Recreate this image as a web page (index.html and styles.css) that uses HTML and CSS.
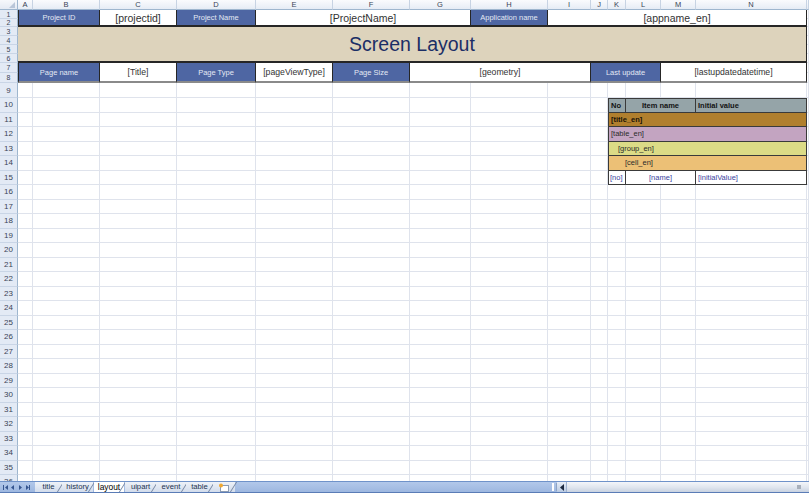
FILE: index.html
```html
<!DOCTYPE html>
<html>
<head>
<meta charset="utf-8">
<link rel="stylesheet" href="styles.css">
</head>
<body>
<div class="app">
  <div class="sheet" id="sheet">
    <div class="corner"><svg width="18" height="10" viewBox="0 0 18 10"><polygon points="15,2 15,8 9,8" fill="#b9c6d8"/></svg></div>
    <div class="colhdr">A</div>
    <div class="colhdr">B</div>
    <div class="colhdr">C</div>
    <div class="colhdr">D</div>
    <div class="colhdr">E</div>
    <div class="colhdr">F</div>
    <div class="colhdr">G</div>
    <div class="colhdr">H</div>
    <div class="colhdr">I</div>
    <div class="colhdr">J</div>
    <div class="colhdr">K</div>
    <div class="colhdr">L</div>
    <div class="colhdr">M</div>
    <div class="colhdr">N</div>
    <div class="colhdr"></div>

    <div class="rowhdr small">1</div>
    <div class="rowhdr small">2</div>
    <div class="rowhdr small">3</div>
    <div class="rowhdr small">4</div>
    <div class="rowhdr small">5</div>
    <div class="rowhdr small">6</div>
    <div class="rowhdr small">7</div>
    <div class="rowhdr small">8</div>
    <div class="rowhdr">9</div>
    <div class="rowhdr">10</div>
    <div class="rowhdr">11</div>
    <div class="rowhdr">12</div>
    <div class="rowhdr">13</div>
    <div class="rowhdr">14</div>
    <div class="rowhdr">15</div>
    <div class="rowhdr">16</div>
    <div class="rowhdr">17</div>
    <div class="rowhdr">18</div>
    <div class="rowhdr">19</div>
    <div class="rowhdr">20</div>
    <div class="rowhdr">21</div>
    <div class="rowhdr">22</div>
    <div class="rowhdr">23</div>
    <div class="rowhdr">24</div>
    <div class="rowhdr">25</div>
    <div class="rowhdr">26</div>
    <div class="rowhdr">27</div>
    <div class="rowhdr">28</div>
    <div class="rowhdr">29</div>
    <div class="rowhdr">30</div>
    <div class="rowhdr">31</div>
    <div class="rowhdr">32</div>
    <div class="rowhdr">33</div>
    <div class="rowhdr">34</div>
    <div class="rowhdr">35</div>
    <div class="rowhdr">36</div>

    <!-- rows 1-2 -->
    <div class="m band1 label first a-pid">Project ID</div>
    <div class="m band1 value a-pidv">[projectid]</div>
    <div class="m band1 label a-pname">Project Name</div>
    <div class="m band1 value a-pnamev">[ProjectName]</div>
    <div class="m band1 label a-app">Application name</div>
    <div class="m band1 value a-appv">[appname_en]</div>

    <!-- rows 3-6 -->
    <div class="m titleband a-title">Screen Layout</div>

    <!-- rows 7-8 -->
    <div class="m band2 label first a-pg">Page name</div>
    <div class="m band2 value2 a-pgv">[Title]</div>
    <div class="m band2 label a-type">Page Type</div>
    <div class="m band2 value2 a-typev">[pageViewType]</div>
    <div class="m band2 label a-size">Page Size</div>
    <div class="m band2 value2 a-sizev">[geometry]</div>
    <div class="m band2 label a-upd">Last update</div>
    <div class="m band2 value2 a-updv">[lastupdatedatetime]</div>

    <!-- item table -->
    <div class="m t thead tl tt a-h-no">No</div>
    <div class="m t thead tt center a-h-name">Item name</div>
    <div class="m t thead tt a-h-init">Initial value</div>
    <div class="m t tl trow r-title a-r11">[title_en]</div>
    <div class="m t tl trow r-table a-r12">[table_en]</div>
    <div class="m t tl trow r-group a-r13">[group_en]</div>
    <div class="m t tl trow r-cell a-r14">[cell_en]</div>
    <div class="m t tl tdata a-d-no">[no]</div>
    <div class="m t tdata center a-d-name">[name]</div>
    <div class="m t tdata a-d-init">[initialValue]</div>
  </div>

  <div class="tabbar">
    <div class="nav">
      <svg width="34" height="11" viewBox="0 0 34 11">
        <rect x="3" y="3" width="1" height="5" fill="#35558f"/>
        <polygon points="8,3 8,8 5,5.5" fill="#35558f"/>
        <polygon points="14,3 14,8 11,5.5" fill="#35558f"/>
        <polygon points="19,3 19,8 22,5.5" fill="#35558f"/>
        <polygon points="26,3 26,8 29,5.5" fill="#35558f"/>
        <rect x="29" y="3" width="1" height="5" fill="#35558f"/>
      </svg>
    </div>
    <div class="tabs">
      <div class="tab w-title">title</div>
      <div class="tab w-history">history</div>
      <div class="tab active w-layout">layout</div>
      <div class="tab w-uipart">uipart</div>
      <div class="tab w-event">event</div>
      <div class="tab w-table">table</div>
      <div class="tab w-new">
        <svg width="12" height="9" viewBox="0 0 12 9">
          <rect x="2.5" y="2.5" width="8" height="6" fill="#fff" stroke="#8b9bb2"/>
          <circle cx="3" cy="2.5" r="2" fill="#f0a830"/>
        </svg>
      </div>
    </div>
    <div class="filler"></div>
    <div class="hscroll">
      <div class="split"></div>
      <div class="sbtn"><svg width="6" height="7" viewBox="0 0 6 7"><polygon points="5,0 5,7 1,3.5" fill="#1d2a40"/></svg></div>
      <div class="track"><div class="grip"></div></div>
    </div>
  </div>
</div>
<script src="script.js"></script>
</body>
</html>
```

FILE: styles.css
```css
* { box-sizing: border-box; }

html, body {
  margin: 0;
  padding: 0;
  background: #ffffff;
  overflow: hidden;
}

.app {
  width: 809px;
  height: 493px;
  display: flex;
  flex-direction: column;
  font-family: "Liberation Sans", Arial, sans-serif;
}

.sheet {
  display: grid;
  grid-template-columns: 18px 15px 67px 77px 79px 77px 77px 61px 77px 43px 17px 18px 35px 35px 111px 2px;
  grid-template-rows: 10px 9px 8px 9px 9px 9px 9px 10px 10px 15px repeat(27, 14.5px);
  height: 481px;
  overflow: hidden;
  background: #fff;
}

.cell {
  border-right: 1px solid #dfe3ec;
  border-bottom: 1px solid #dfe3ec;
}

.corner {
  grid-row: 1;
  grid-column: 1;
  background: linear-gradient(#f6f8fb, #e4eaf3);
  border-right: 1px solid #9eb6ce;
  border-bottom: 1px solid #9eb6ce;
  z-index: 2;
}
.corner svg { display: block; }

.colhdr {
  grid-row: 1;
  background: linear-gradient(#fafbfd, #e6ecf5);
  border-right: 1px solid #c7d3e3;
  border-bottom: 1px solid #9eb6ce;
  color: #3a4456;
  font-size: 7.5px;
  line-height: 9px;
  text-align: center;
  overflow: hidden;
  z-index: 2;
}

.rowhdr {
  grid-column: 1;
  background: #e3eaf5;
  border-right: 1px solid #9eb6ce;
  border-bottom: 1px solid #c9d5e6;
  color: #3a4456;
  font-size: 8px;
  display: flex;
  align-items: center;
  justify-content: center;
  overflow: hidden;
  z-index: 2;
}
.rowhdr.small {
  font-size: 7px;
  line-height: 7px;
}

/* merged cells */
.m {
  z-index: 1;
  display: flex;
  align-items: center;
  justify-content: center;
  overflow: hidden;
  white-space: nowrap;
}

.band1 {
  border-right: 1px solid #262626;
  border-bottom: 2px solid #262626;
}
.band2 {
  border-right: 1px solid #262626;
  border-bottom: 2px solid #8a8a8a;
}
.first { border-left: 1px solid #262626; }

.label {
  background: #4e66a3;
  color: #e3e8f3;
  font-size: 7.5px;
}
.value {
  background: #fff;
  color: #333;
  font-size: 10.5px;
}
.value2 {
  background: #fff;
  color: #333;
  font-size: 8.7px;
}

.titleband {
  background: #ddd3bc;
  color: #1b2e66;
  font-size: 19.5px;
  border-right: 1px solid #262626;
  border-bottom: 2px solid #262626;
}

.a-pid { grid-area: 2 / 2 / 4 / 4; }
.a-pidv { grid-area: 2 / 4 / 4 / 5; }
.a-pname { grid-area: 2 / 5 / 4 / 6; }
.a-pnamev { grid-area: 2 / 6 / 4 / 9; }
.a-app { grid-area: 2 / 9 / 4 / 10; }
.a-appv { grid-area: 2 / 10 / 4 / 16; }
.a-title { grid-area: 4 / 2 / 8 / 16; }
.a-pg { grid-area: 8 / 2 / 10 / 4; }
.a-pgv { grid-area: 8 / 4 / 10 / 5; }
.a-type { grid-area: 8 / 5 / 10 / 6; }
.a-typev { grid-area: 8 / 6 / 10 / 7; }
.a-size { grid-area: 8 / 7 / 10 / 8; }
.a-sizev { grid-area: 8 / 8 / 10 / 11; }
.a-upd { grid-area: 8 / 11 / 10 / 14; }
.a-updv { grid-area: 8 / 14 / 10 / 16; }

/* item table */
.t {
  justify-content: flex-start;
  font-size: 7.5px;
  padding-left: 2px;
  border-right: 1px solid #3a3a3a;
  border-bottom: 1px solid #3a3a3a;
}
.t.center { justify-content: center; padding-left: 0; }
.tl { border-left: 1px solid #3a3a3a; }
.tt { border-top: 1px solid #3a3a3a; }

.thead {
  background: #95a4a8;
  color: #121212;
  font-weight: bold;
}
.trow { color: #2b2b2b; }
.r-title { background: #b07f2e; font-weight: bold; color: #1a1206; }
.r-table { background: #c3a4c1; }
.r-group { background: #dcdb86; padding-left: 9px; }
.r-cell { background: #ecc076; padding-left: 16px; }
.tdata { background: #fff; color: #3b44a0; }

.a-h-no { grid-area: 11 / 12 / 12 / 13; }
.a-h-name { grid-area: 11 / 13 / 12 / 15; }
.a-h-init { grid-area: 11 / 15 / 12 / 16; }
.a-r11 { grid-area: 12 / 12 / 13 / 16; }
.a-r12 { grid-area: 13 / 12 / 14 / 16; }
.a-r13 { grid-area: 14 / 12 / 15 / 16; }
.a-r14 { grid-area: 15 / 12 / 16 / 16; }
.a-d-no { grid-area: 16 / 12 / 17 / 13; padding-left: 1px; }
.a-d-name { grid-area: 16 / 13 / 17 / 15; }
.a-d-init { grid-area: 16 / 15 / 17 / 16; }

/* sheet tabs */
.tabbar {
  height: 12px;
  display: flex;
  align-items: stretch;
  background: linear-gradient(#b2c8ea, #9db7e0);
  border-top: 1px solid #6f92c9;
  border-bottom: 1px solid #5a7cb6;
}

.nav {
  width: 35px;
  display: flex;
  align-items: center;
}
.nav svg { display: block; }

.tabs {
  display: flex;
  align-items: stretch;
}

.tab {
  position: relative;
  background: linear-gradient(#eef2f8, #d2dcec);
  color: #22324f;
  font-size: 7.7px;
  line-height: 10px;
  text-align: center;
  white-space: nowrap;
}
.tab::after {
  content: "";
  position: absolute;
  right: 1px;
  top: 0;
  bottom: 0;
  width: 1px;
  background: #7687a3;
  transform: skewX(-32deg);
}
.tab.active {
  background: #ffffff;
  color: #000;
  font-size: 8.4px;
  margin: 0 1px;
}

.w-title { width: 27px; }
.w-history { width: 31px; }
.w-layout { width: 30px; }
.w-uipart { width: 31px; }
.w-event { width: 30px; }
.w-table { width: 27px; }
.w-new {
  width: 22px;
  display: flex;
  align-items: center;
  justify-content: center;
}
.w-new svg { display: block; }

.filler { flex: 1; }

.hscroll {
  width: 257px;
  display: flex;
  align-items: stretch;
}
.split {
  width: 5px;
  margin: 1px 0;
  border-left: 2px solid #fdfdfe;
  border-right: 1px solid #8da3c4;
}
.sbtn {
  width: 10px;
  display: flex;
  align-items: center;
  justify-content: center;
  background: linear-gradient(#e8eef7, #b8c9e2);
  border-right: 1px solid #9fb2cf;
}
.sbtn svg { display: block; }
.track {
  flex: 1;
  position: relative;
  background: linear-gradient(#f4f6fa, #dfe5ee 55%, #c8d2e1);
}
.grip {
  position: absolute;
  right: 8px;
  top: 3px;
  width: 4px;
  height: 4px;
  background: #a7afbb;
}
```

FILE: script.js
```js
(function () {
  var sheet = document.getElementById('sheet');
  var frag = document.createDocumentFragment();
  for (var r = 2; r <= 37; r++) {
    for (var c = 2; c <= 16; c++) {
      var d = document.createElement('div');
      d.className = 'cell';
      d.style.gridRow = String(r);
      d.style.gridColumn = String(c);
      frag.appendChild(d);
    }
  }
  sheet.insertBefore(frag, sheet.firstChild);
})();
```
